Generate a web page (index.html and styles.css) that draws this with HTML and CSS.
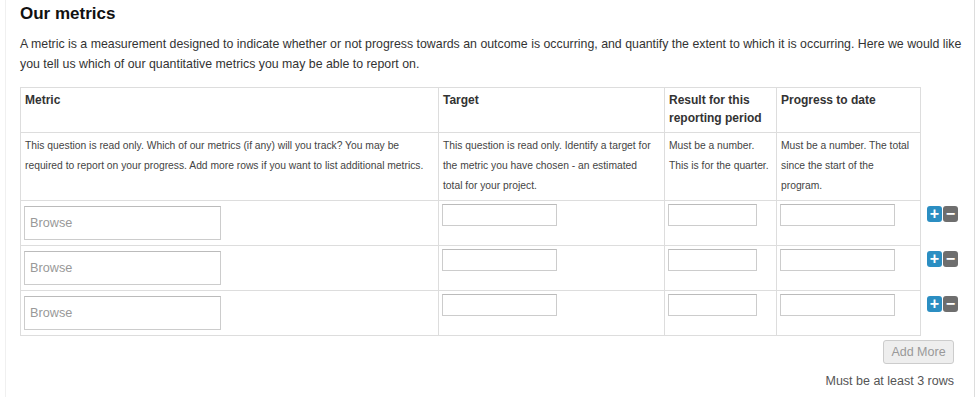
FILE: index.html
```html
<!DOCTYPE html>
<html lang="en">
  <head>
    <meta charset="UTF-8" />
    <title>Our metrics</title>
    <link rel="stylesheet" href="styles.css">
  </head>
  <body>
    <div class="page">
      <h2>Our metrics</h2>
      <p class="intro">
        A metric is a measurement designed to indicate whether or not progress towards an outcome is occurring, and quantify the extent to which it is occurring. Here we would like
        you tell us which of our quantitative metrics you may be able to report on.
      </p>
      <table class="metrics">
        <colgroup>
          <col class="c-metric">
          <col class="c-target">
          <col class="c-result">
          <col class="c-progress">
          <col class="c-actions">
        </colgroup>
        <tr class="head-row">
          <th>Metric</th>
          <th>Target</th>
          <th>Result for this reporting period</th>
          <th>Progress to date</th>
          <td class="actions"></td>
        </tr>
        <tr class="desc-row">
          <td>This question is read only. Which of our metrics (if any) will you track? You may be required to report on your progress. Add more rows if you want to list additional metrics.</td>
          <td class="desc-target">This question is read only. Identify a target for the metric you have chosen - an estimated total for your project.</td>
          <td>Must be a number. This is for the quarter.</td>
          <td>Must be a number. The total since the start of the program.</td>
          <td class="actions"></td>
        </tr>
        <tr class="data-row">
          <td><input class="browse" type="text" placeholder="Browse"></td>
          <td><input class="num wide" type="text"></td>
          <td><input class="num narrow" type="text"></td>
          <td><input class="num wide" type="text"></td>
          <td class="actions"><span class="btn-add">+</span><span class="btn-del">&minus;</span></td>
        </tr>
        <tr class="data-row">
          <td><input class="browse" type="text" placeholder="Browse"></td>
          <td><input class="num wide" type="text"></td>
          <td><input class="num narrow" type="text"></td>
          <td><input class="num wide" type="text"></td>
          <td class="actions"><span class="btn-add">+</span><span class="btn-del">&minus;</span></td>
        </tr>
        <tr class="data-row">
          <td><input class="browse" type="text" placeholder="Browse"></td>
          <td><input class="num wide" type="text"></td>
          <td><input class="num narrow" type="text"></td>
          <td><input class="num wide" type="text"></td>
          <td class="actions"><span class="btn-add">+</span><span class="btn-del">&minus;</span></td>
        </tr>
      </table>
      <div class="footer">
        <button class="add-more" type="button">Add More</button>
        <p class="note">Must be at least 3 rows</p>
      </div>
    </div>
  </body>
</html>
```

FILE: styles.css
```css
body {
  margin: 0;
  font-family: "Liberation Sans", Arial, sans-serif;
  color: #333;
  background-color: #fff;
}
.page {
  margin-left: 5px;
  width: 954px;
  height: 397px;
  padding: 0 0 0 14px;
  border-left: 1px solid #f0f0f0;
  border-right: 1px solid #ddd;
  box-sizing: content-box;
}
h2 {
  margin: 0;
  padding-top: 4px;
  font-size: 17px;
  line-height: 20px;
  color: #111;
}
.intro {
  margin: 10px 0 13px;
  font-size: 12.35px;
  line-height: 20px;
  color: #333;
}
.metrics {
  border-collapse: collapse;
  table-layout: fixed;
  width: 940px;
}
.c-metric { width: 418px; }
.c-target { width: 226px; }
.c-result { width: 112px; }
.c-progress { width: 144px; }
.c-actions { width: 40px; }
.metrics th,
.metrics td {
  border: 1px solid #ddd;
  vertical-align: top;
  text-align: left;
}
.metrics td.actions {
  border: none;
  padding: 5px 0 0 6px;
}
.head-row th {
  height: 45px;
  padding: 3px 4px;
  font-size: 12px;
  line-height: 18px;
  color: #333;
  box-sizing: border-box;
}
.desc-row td {
  height: 68px;
  padding: 3px 3px 0 4px;
  font-size: 10.3px;
  line-height: 20px;
  color: #444;
  box-sizing: border-box;
}
.desc-row td.desc-target {
  padding-right: 8px;
}
.data-row td {
  height: 45px;
  padding: 3px 3px 0 3px;
  box-sizing: border-box;
}
.data-row input {
  display: block;
  box-sizing: border-box;
  margin: 0;
  border: 1px solid #ccc;
  border-top-color: #bbb;
  font-family: inherit;
  background-color: #fff;
}
.browse {
  width: 197px;
  height: 34px;
  margin-top: 2px !important;
  padding: 0 5px;
  font-size: 12.7px;
}
.browse::placeholder {
  color: #999;
}
.num {
  height: 22px;
}
.wide { width: 115px; }
.narrow { width: 89px; }
.btn-add,
.btn-del {
  display: inline-block;
  width: 15px;
  height: 16px;
  margin-right: 1px;
  border-radius: 3px;
  color: #fff;
  font-size: 16px;
  font-weight: bold;
  line-height: 16px;
  text-align: center;
  vertical-align: top;
}
.btn-add { background-color: #2b8ec2; }
.btn-del { background-color: #6e6e6e; }
.footer {
  width: 934px;
  text-align: right;
}
.add-more {
  margin-top: 4px;
  height: 24px;
  width: 71px;
  padding: 0;
  border: 1px solid #ccc;
  border-radius: 3px;
  background-color: #eee;
  color: #999;
  font-family: inherit;
  font-size: 12.5px;
}
.note {
  margin: 10px 0 0;
  font-size: 12.5px;
  line-height: 14px;
  color: #555;
}
```
